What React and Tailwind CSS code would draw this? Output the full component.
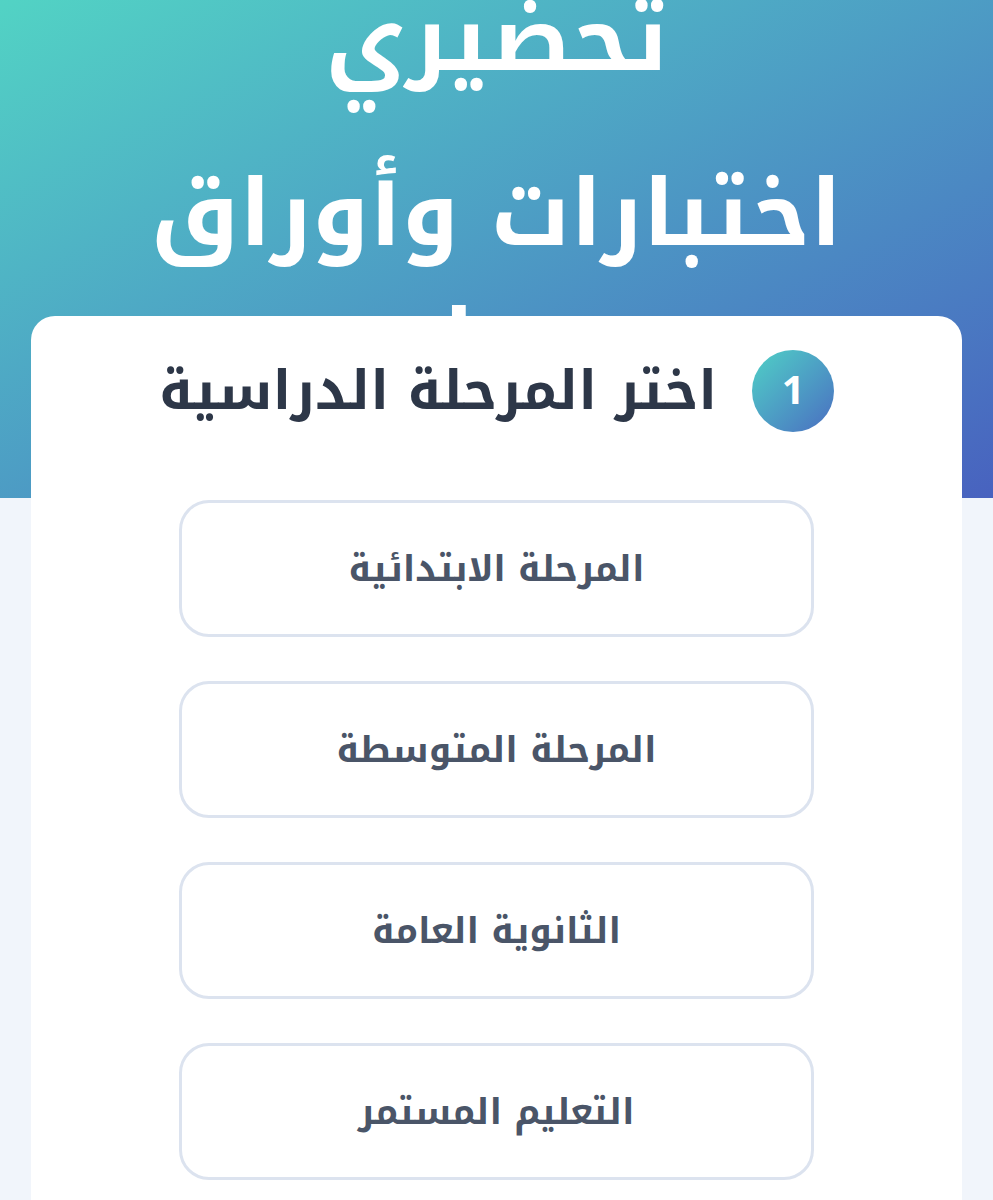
const stages = [
  'المرحلة الابتدائية',
  'المرحلة المتوسطة',
  'الثانوية العامة',
  'التعليم المستمر',
];

const arabic = { fontFamily: '"Noto Kufi Arabic", "Noto Sans Arabic", sans-serif' };

export default function App() {
  return (
    <div dir="rtl" className="min-h-screen bg-[#f1f5fb]" style={arabic}>
      <header className="h-[498px] overflow-hidden bg-gradient-to-br from-[#52d3c4] to-[#4862bf] text-center text-white">
        <h1 className="-mt-[30px] font-bold">
          <span className="block text-[92px] leading-[140px]">تحضيري</span>
          <span className="mx-auto mt-[40px] block max-w-[720px] text-[92px] leading-[130px]">
            اختبارات وأوراق عمل
          </span>
        </h1>
      </header>

      <main className="relative z-10 mx-[31px] -mt-[182px] rounded-[24px] bg-white pb-16 pt-[34px]">
        <div className="flex items-center justify-center gap-[35px]">
          <span className="flex h-[82px] w-[82px] items-center justify-center rounded-full bg-gradient-to-br from-[#4fd1c5] to-[#4a6dc0] text-[40px] font-bold leading-none text-white">
            1
          </span>
          <h2 className="text-[54px] font-bold leading-none text-[#2d3748]">اختر المرحلة الدراسية</h2>
        </div>

        <div className="mt-[68px] flex flex-col items-center gap-[44px]">
          {stages.map((s) => (
            <button
              key={s}
              className="flex h-[137px] w-[635px] items-center justify-center rounded-[30px] border-[3px] border-[#dce3ef] bg-white text-[36px] font-bold text-[#4a5568]"
            >
              {s}
            </button>
          ))}
        </div>
      </main>
    </div>
  );
}
